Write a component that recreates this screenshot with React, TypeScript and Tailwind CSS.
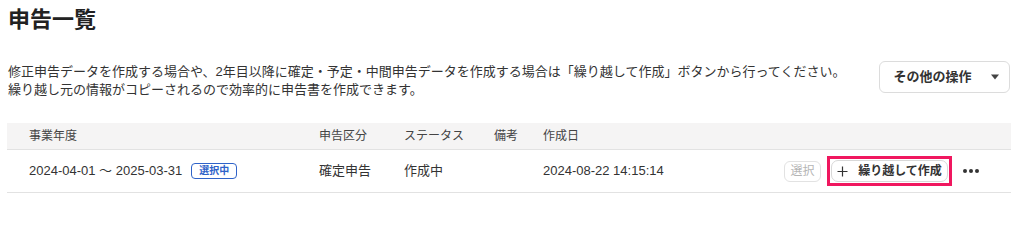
import React from "react";

const font = { fontFamily: '"Liberation Sans", "Noto Sans CJK JP", sans-serif' };

function Caret() {
  return (
    <svg width="10" height="6" viewBox="0 0 10 6" className="fill-[#444]">
      <path d="M1 0.5h8L5 5.5z" />
    </svg>
  );
}

function Plus() {
  return (
    <svg width="11" height="11" viewBox="0 0 11 11" className="stroke-[#333]" strokeWidth="1.2">
      <path d="M5.5 0.5v10M0.5 5.5h10" />
    </svg>
  );
}

export default function App() {
  return (
    <div className="w-[1018px] h-[235px] bg-white text-[#333] px-[8px]" style={font}>
      <h1 className="pt-[3px] text-[22px] font-bold leading-[33px] text-[#222]">申告一覧</h1>

      <div className="mt-[27px] flex items-start justify-between">
        <p className="text-[13px] leading-[18px] text-[#333]">
          修正申告データを作成する場合や、2年目以降に確定・予定・中間申告データを作成する場合は「繰り越して作成」ボタンから行ってください。
          <br />
          繰り越し元の情報がコピーされるので効率的に申告書を作成できます。
        </p>
        <button className="-mt-[2px] flex h-[32px] w-[131px] items-center justify-center gap-[18px] rounded-[6px] border border-[#dcdcdc] bg-white pl-[4px] text-[13px] font-bold text-[#333]">
          その他の操作
          <Caret />
        </button>
      </div>

      <div className="mt-[24px] -ml-[1px] w-[1004px]">
        <div className="flex h-[27px] items-center border-b border-[#e2e2e2] bg-[#f5f4f4] pl-[22px] text-[12px] text-[#444]">
          <div className="w-[290px]">事業年度</div>
          <div className="w-[85px]">申告区分</div>
          <div className="w-[90px]">ステータス</div>
          <div className="w-[49px]">備考</div>
          <div>作成日</div>
        </div>
        <div className="flex h-[43px] items-center border-b border-[#e2e2e2] pl-[22px] text-[13px] text-[#333]">
          <div className="flex w-[290px] items-center">
            <span>2024-04-01 ～ 2025-03-31</span>
            <span className="ml-[9px] flex h-[16px] items-center rounded-[4px] border border-[#2f63c9] px-[7px] text-[10px] font-bold leading-none text-[#2f63c9]">
              選択中
            </span>
          </div>
          <div className="w-[85px]">確定申告</div>
          <div className="w-[90px]">作成中</div>
          <div className="w-[49px]"></div>
          <div className="flex-1">2024-08-22 14:15:14</div>
          <div className="flex items-center">
            <button className="flex h-[21px] w-[37px] items-center justify-center rounded-[6px] border border-[#e2e2e2] text-[12px] text-[#b5b5b5]">
              選択
            </button>
            <span className="ml-[6px] block border-[3px] border-[#f0175f] p-[1px]">
              <button className="flex h-[22px] w-[117px] items-center justify-center gap-[10px] rounded-[7px] border border-[#d8d8d8] bg-white text-[12px] font-bold text-[#333]">
                <Plus />
                繰り越して作成
              </button>
            </span>
            <span className="ml-[11px] mr-[32px] flex items-center gap-[2px]">
              <span className="block h-[4px] w-[4px] rounded-full bg-[#333]" />
              <span className="block h-[4px] w-[4px] rounded-full bg-[#333]" />
              <span className="block h-[4px] w-[4px] rounded-full bg-[#333]" />
            </span>
          </div>
        </div>
      </div>
    </div>
  );
}
